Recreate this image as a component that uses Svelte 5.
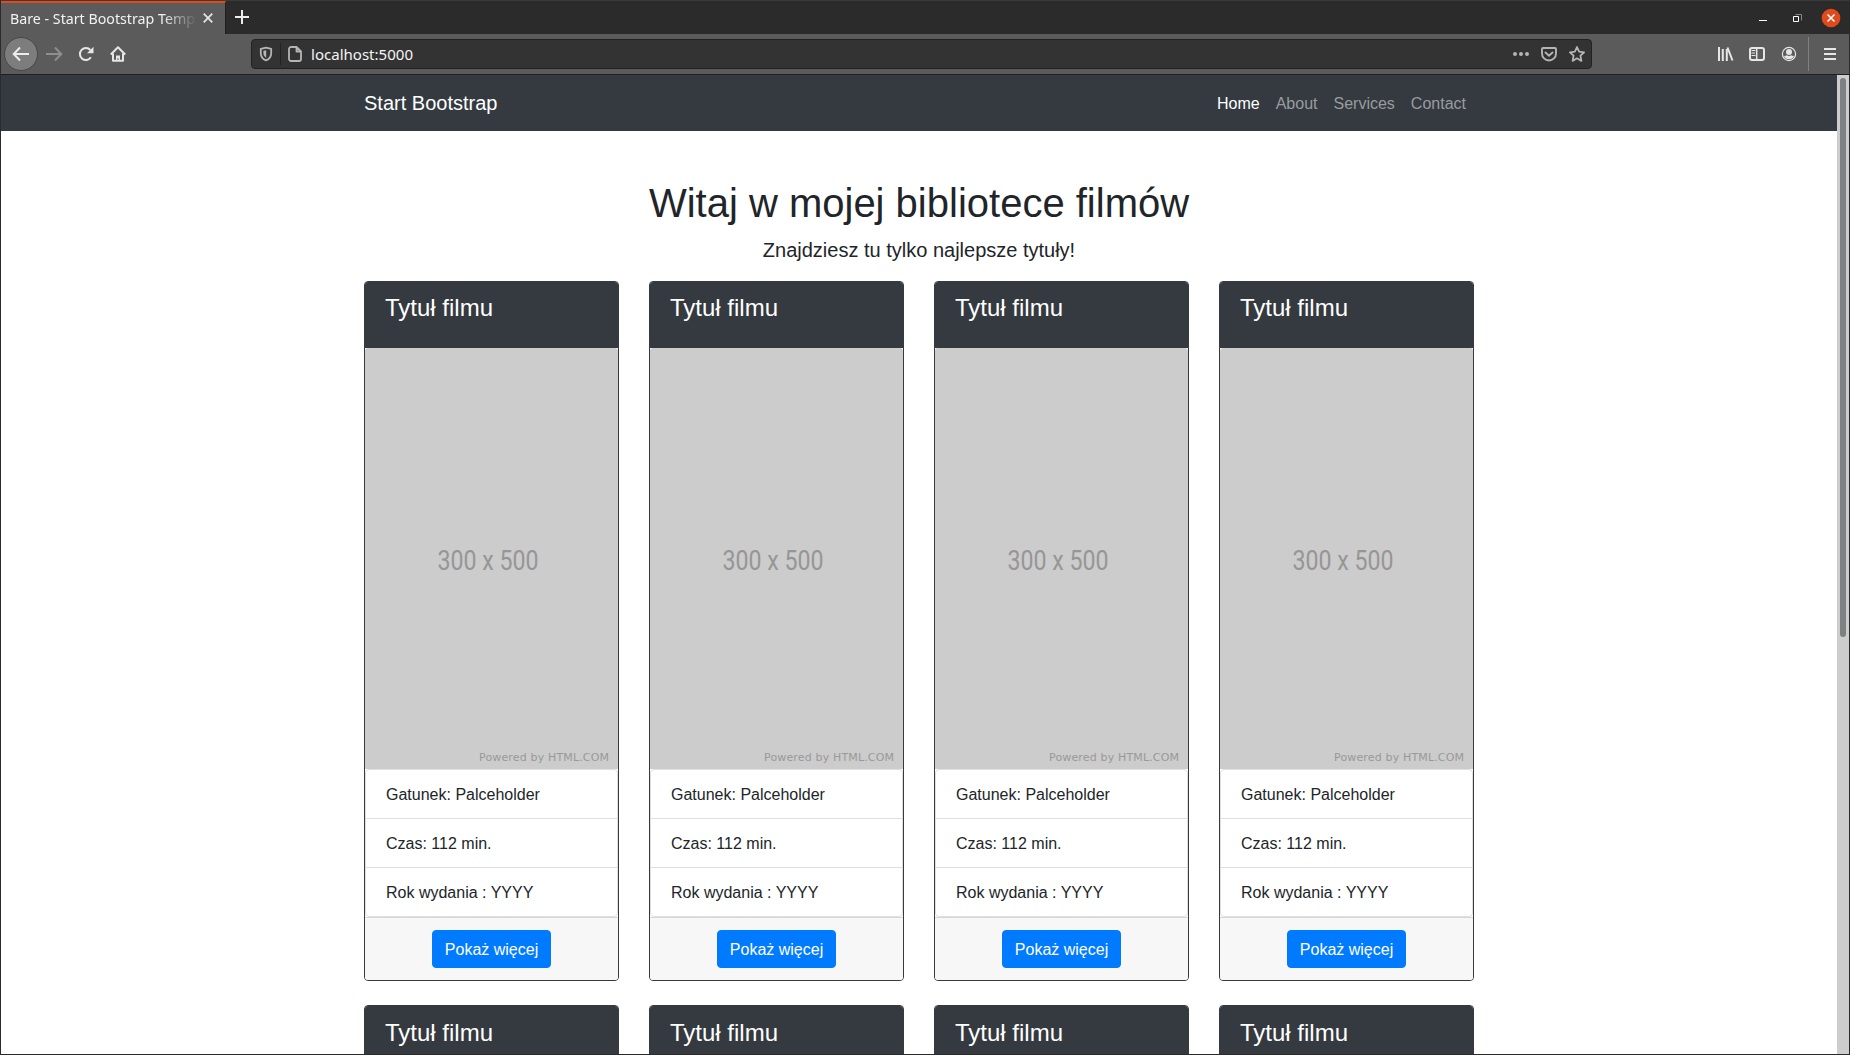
<script>
  const links = ['Home', 'About', 'Services', 'Contact'];
  const films = Array.from({ length: 8 }, (_, i) => i);
</script>

<div class="window">
  <div class="tabbar">
    <div class="tab">
      <svg class="tabtitle" width="187" height="24"><text x="0" y="15.500" textLength="185" lengthAdjust="spacingAndGlyphs">Bare - Start Bootstrap Temp</text></svg>
      <svg class="ic" width="12" height="12" viewBox="0 0 12 12"><path d="M1.7 1.7l8.6 8.6M10.3 1.7l-8.6 8.6" stroke="#e6e6e6" stroke-width="1.7" /></svg>
    </div>
    <svg class="plus" width="16" height="16" viewBox="0 0 16 16"><path d="M8 1v14M1 8h14" stroke="#ededed" stroke-width="2" /></svg>
    <div class="grow"></div>
    <svg class="winctl" width="90" height="24" viewBox="0 0 90 24">
      <path d="M4 14.5h8" stroke="#fff" />
      <path d="M40.500 8.500h6v6" fill="none" stroke="#888" />
      <path d="M38.500 10.500h5v5h-5z" fill="none" stroke="#fff" />
      <circle cx="76" cy="12" r="9.300" fill="#e2491b" />
      <path d="M72.500 8.500l7 7M79.500 8.500l-7 7" stroke="#fff" stroke-width="1.600" />
    </svg>
  </div>

  <div class="toolbar">
    <div class="back">
      <svg width="18" height="16" viewBox="0 0 18 16"><path d="M17 8H2M8 1.500L1.700 8 8 14.500" fill="none" stroke="#ededed" stroke-width="2" /></svg>
    </div>
    <svg class="fwd" width="18" height="16" viewBox="0 0 18 16"><path d="M1 8h15M10 1.500L16.300 8 10 14.500" fill="none" stroke="#8e8e8e" stroke-width="2" /></svg>
    <svg class="reload" width="16" height="16" viewBox="0 0 16 16"><path d="M12.900 11.300A6 6 0 1 1 12.400 4" fill="none" stroke="#e6e6e6" stroke-width="2" /><path d="M15.500 .8v6.400H9z" fill="#e6e6e6" /></svg>
    <svg class="home" width="16" height="16" viewBox="0 0 16 16"><path d="M.8 8.500L8 1.300l7.200 7.200M3 7.500V14.800h10V7.500" fill="none" stroke="#e6e6e6" stroke-width="2" stroke-linejoin="round" /><path d="M6 15V9.500h4V15H8.700v-2.500H7.300V15z" fill="#e6e6e6" /></svg>
    <div class="urlbar">
      <svg class="shield" width="14" height="16" viewBox="0 0 14 16"><path d="M7 1.700l5.200 1.200v4.300c0 3.300-2 5.900-5.200 7.100C3.800 13.100 1.800 10.500 1.800 7.200V2.900z" fill="none" stroke="#b5b5b5" stroke-width="1.800" stroke-linejoin="round" /><path d="M7.200 4.200v7.500C5.300 10.700 4.400 9 4.400 7V4.800z" fill="#b5b5b5" /></svg>
      <div class="sep"></div>
      <svg class="doc" width="14" height="16" viewBox="0 0 14 16"><path d="M3 1h5.500L13 5.500V13a2 2 0 0 1-2 2H3a2 2 0 0 1-2-2V3a2 2 0 0 1 2-2zM8.500 1v4.500H13" fill="none" stroke="#b5b5b5" stroke-width="1.800" stroke-linejoin="round" /></svg>
      <svg class="url" width="120" height="24"><text x="0" y="18" textLength="102" lengthAdjust="spacingAndGlyphs">localhost:5000</text></svg>
      <div class="grow"></div>
      <svg class="acts" width="74" height="18" viewBox="0 0 74 18">
        <g fill="#b5b5b5"><circle cx="3" cy="9" r="2" /><circle cx="9" cy="9" r="2" /><circle cx="15" cy="9" r="2" /></g>
        <path d="M31 3h12a1 1 0 0 1 1 1v4.500a7 7 0 0 1-14 0V4a1 1 0 0 1 1-1zM33.500 7.500L37 10.700l3.500-3.200" fill="none" stroke="#b5b5b5" stroke-width="1.900" stroke-linecap="round" />
        <path d="M65 2l2.100 4.700 5 .6-3.700 3.400 1 5.200L65 13.300l-4.400 2.600 1-5.200-3.700-3.400 5-.6z" fill="none" stroke="#b5b5b5" stroke-width="1.800" stroke-linejoin="round" />
      </svg>
    </div>
    <div class="grow"></div>
    <svg class="tools" width="120" height="34" viewBox="0 0 120 34">
      <path d="M2 10v14M5.800 12v12M9.800 12v12" stroke="#e6e6e6" stroke-width="2" /><path d="M10.500 10.500L15.500 23.500" stroke="#e6e6e6" stroke-width="2" />
      <rect x="33" y="11" width="14" height="12" rx="2" fill="none" stroke="#e6e6e6" stroke-width="2" /><path d="M39.700 11v12" stroke="#e6e6e6" stroke-width="1.500" /><path d="M34.500 13.500h4M34.500 16h3.500M34.500 18.500h4" stroke="#e6e6e6" stroke-width="1.200" />
      <circle cx="72" cy="17" r="6.600" fill="none" stroke="#e6e6e6" stroke-width="1.200" /><circle cx="72" cy="15" r="3" fill="#e6e6e6" /><path d="M67 19q2 0 2.800-.8 2.200 1.500 4.400 0Q75 19 77 19q-1.300 3.300-5 3.300T67 19z" fill="#e6e6e6" />
      <path d="M91.500 0v34" stroke="#818181" /><path d="M107 12h12M107 17h12M107 22h12" stroke="#e6e6e6" stroke-width="2" />
    </svg>
  </div>

  <div class="viewport">
    <div class="page">
      <nav>
        <div class="container navrow">
          <span class="brand">Start Bootstrap</span>
          <div class="links">
            {#each links as l, i}<span class:active={i === 0}>{l}</span>{/each}
          </div>
        </div>
      </nav>
      <main class="container">
        <h1>Witaj w mojej bibliotece filmów</h1>
        <p class="lead">Znajdziesz tu tylko najlepsze tytuły!</p>
        <div class="grid">
          {#each films as f (f)}
            <article class="card">
              <header class:second={f > 3}><h4>Tytuł filmu</h4></header>
              <svg class="poster" width="253" height="421" viewBox="0 0 253 421">
                <rect width="253" height="424" rx="3" fill="#ccc" />
                <rect y="10" width="253" height="411" fill="#ccc" />
                <text class="size" x="72.500" y="222" textLength="101" lengthAdjust="spacingAndGlyphs">300 x 500</text>
                <text class="powered" x="114" y="412.500" textLength="130">Powered by HTML.COM</text>
              </svg>
              <ul>
                <li>Gatunek: Palceholder</li>
                <li>Czas: 112 min.</li>
                <li>Rok wydania : YYYY</li>
              </ul>
              <footer><button>Pokaż więcej</button></footer>
            </article>
          {/each}
        </div>
      </main>
    </div>
    <div class="scrollbar"><div class="thumb"></div></div>
  </div>
</div>

<style>
  :global(body) { margin: 0; overflow: hidden; }
  .window, .window * { box-sizing: border-box; }
  .window { width: 1850px; height: 1055px; display: flex; flex-direction: column; overflow: hidden; border: 1px solid #2b2b2b; border-top: 0; background: #2b2b2b; font-family: "Liberation Sans", Arial, sans-serif; }
  svg { display: block; flex: none; }
  .grow { flex: 1; }
  .tabbar { height: 34px; flex: none; display: flex; border-top: 1px solid #3b3b3b; background: #2b2b2b; }
  .tab { width: 225px; height: 33px; display: flex; padding: 5px 11px 0 9px; background: #5b5b5b; border-top: 2px solid #e2491b; border-right: 1px solid #1f1f1f; justify-content: space-between; }
  .tabtitle { font: 14px "Noto Sans", sans-serif; fill: #f2f2f2; -webkit-mask-image: linear-gradient(90deg, #000 152px, transparent 187px); mask-image: linear-gradient(90deg, #000 152px, transparent 187px); }
  .ic { margin-top: 4px; }
  .plus { margin: 8px 0 0 8px; }
  .winctl { margin: 5px 4px 0 0; }
  .toolbar { height: 41px; flex: none; display: flex; align-items: center; background: #5b5b5b; border-bottom: 1px solid #1f1f1f; }
  .back { width: 34px; height: 34px; margin-left: 3px; border-radius: 50%; border: 1px solid #474747; background: #7d7d7d; display: flex; align-items: center; justify-content: center; }
  .fwd { margin-left: 7px; }
  .reload { margin-left: 15px; }
  .home { margin-left: 16px; }
  .urlbar { width: 1341px; height: 30px; margin-left: 125px; display: flex; align-items: center; background: #333; border: 1px solid #222; border-radius: 4px; }
  .shield { margin-left: 7px; }
  .sep { width: 1px; height: 22px; margin: 0 7px; background: #222; }
  .url { margin-left: 9px; font: 14px "Noto Sans", sans-serif; fill: #f5f5f5; }
  .acts { margin-right: 5px; }
  .tools { margin-right: 12px; }
  .viewport { flex: 1; min-height: 0; display: flex; }
  .page { width: 1836px; overflow: hidden; background: #fff; color: #212529; font-size: 16px; line-height: 24px; }
  .scrollbar { width: 12px; padding: 3px; background: #cdcdcd; }
  .thumb { width: 6px; height: 559px; border-radius: 3px; background: #7d8182; }
  .container { width: 1140px; margin: 0 auto; padding: 0 15px; }
  nav { height: 56px; background: #343a40; }
  .navrow { height: 56px; display: flex; align-items: center; justify-content: space-between; }
  .brand { font-size: 20px; line-height: 30px; color: #fff; }
  .links { display: flex; color: #999c9f; }
  .links span { padding: 10px 8px 8px; }
  .links .active { color: #fff; }
  h1 { margin: 48px 0 8px; font-size: 40px; line-height: 48px; font-weight: 400; text-align: center; }
  .lead { margin: 0 0 16px; font-size: 20px; line-height: 30px; text-align: center; }
  .grid { display: grid; grid-template-columns: repeat(4, 255px); column-gap: 30px; row-gap: 24px; }
  .card { height: 700px; display: flex; flex-direction: column; border: 1px solid #343a40; border-radius: 4px; background: #fff; }
  header { height: 66px; flex: none; padding: 12px 20px; border-radius: 3px 3px 0 0; background: #343a40; color: #fff; }
  header.second { padding-top: 13px; }
  h4 { margin: 0; font-size: 24px; line-height: 28.8px; font-weight: 400; }
  .size { font: 27px Roboto, sans-serif; fill: #969696; }
  .powered { font: 11px "DejaVu Sans", sans-serif; fill: #999; }
  ul { margin: 0; padding: 0; list-style: none; border: 1px solid #dfdfdf; border-radius: 4px; }
  li { height: 49px; padding: 13px 20px 11px; border-bottom: 1px solid #dfdfdf; }
  li:last-child { border-bottom: 0; height: 48px; }
  footer { flex: 1; padding-top: 12px; border-top: 1px solid #d8d8d8; border-radius: 0 0 3px 3px; background: #f7f7f7; display: flex; justify-content: center; align-items: flex-start; }
  button { height: 38px; padding: 7px 12px 5px; border: 1px solid #007bff; border-radius: 4px; background: #007bff; color: #fff; font: 16px/24px "Liberation Sans", Arial, sans-serif; }
</style>
